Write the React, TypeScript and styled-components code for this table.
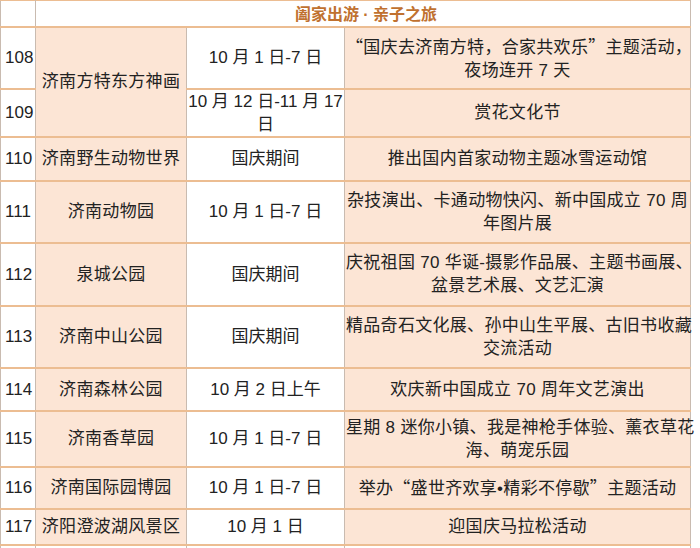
import React from 'react';
import styled, { createGlobalStyle } from 'styled-components';

const GlobalStyle = createGlobalStyle`
  html, body {
    margin: 0;
    padding: 0;
    background: #ffffff;
  }
  body {
    font-family: "Liberation Sans", "Noto Sans CJK SC", sans-serif;
    color: #222222;
  }
`;

const Page = styled.div`
  width: 700px;
  height: 548px;
  overflow: hidden;
  background: #ffffff;
`;

const Table = styled.table`
  width: 690px;
  border-collapse: collapse;
  table-layout: fixed;
`;

const Row = styled.tr<{ $h: number }>`
  height: ${(p) => p.$h}px;
`;

type Kind = 'no' | 'name' | 'date' | 'act' | 'blank';

const Cell = styled.td<{ $kind: Kind }>`
  padding: 0 1px 0 ${(p) => (p.$kind === 'no' ? '4px' : '1px')};
  background: ${(p) => (p.$kind === 'name' || p.$kind === 'act' ? '#fce5d5' : '#ffffff')};
  border-left: 1px solid #c9bbb0;
  border-right: 1px solid #c9bbb0;
  border-top: 2px solid #ecbd92;
  border-bottom: 2px solid #ecbd92;
  text-align: ${(p) => (p.$kind === 'no' ? 'left' : 'center')};
  vertical-align: middle;
  font-size: 17px;
  letter-spacing: ${(p) => (p.$kind === 'name' || p.$kind === 'act' ? '0.3px' : '0')};
  line-height: 23px;
  color: #222222;
  white-space: nowrap;
`;

const HeadCell = styled.td`
  padding: 0 0 0 6px;
  background: #ffffff;
  border-left: 1px solid #c9bbb0;
  border-right: 1px solid #c9bbb0;
  border-top: 1px solid #ecbd92;
  border-bottom: 2px solid #ecbd92;
  text-align: center;
  font-size: 16px;
  font-weight: bold;
  letter-spacing: 0;
  color: #c0712f;
`;

// full-width CJK quote marks
const Wide = styled.span`
  font-family: "Noto Sans CJK SC", sans-serif;
`;

type Item = {
  no: number;
  name?: string;
  span?: number;
  date: React.ReactNode[];
  act: React.ReactNode[];
  h: number;
};

const items: Item[] = [
  {
    no: 108,
    name: '济南方特东方神画',
    span: 2,
    date: ['10 月 1 日-7 日'],
    act: [
      <>
        <Wide>“</Wide>国庆去济南方特，合家共欢乐<Wide>”</Wide>主题活动，
      </>,
      '夜场连开 7 天',
    ],
    h: 62,
  },
  { no: 109, date: ['10 月 12 日-11 月 17', '日'], act: ['赏花文化节'], h: 48 },
  { no: 110, name: '济南野生动物世界', date: ['国庆期间'], act: ['推出国内首家动物主题冰雪运动馆'], h: 44 },
  { no: 111, name: '济南动物园', date: ['10 月 1 日-7 日'], act: ['杂技演出、卡通动物快闪、新中国成立 70 周', '年图片展'], h: 62 },
  { no: 112, name: '泉城公园', date: ['国庆期间'], act: ['庆祝祖国 70 华诞-摄影作品展、主题书画展、', '盆景艺术展、文艺汇演'], h: 63 },
  { no: 113, name: '济南中山公园', date: ['国庆期间'], act: ['精品奇石文化展、孙中山生平展、古旧书收藏', '交流活动'], h: 62 },
  { no: 114, name: '济南森林公园', date: ['10 月 2 日上午'], act: ['欢庆新中国成立 70 周年文艺演出'], h: 43 },
  { no: 115, name: '济南香草园', date: ['10 月 1 日-7 日'], act: ['星期 8 迷你小镇、我是神枪手体验、薰衣草花', '海、萌宠乐园'], h: 56 },
  {
    no: 116,
    name: '济南国际园博园',
    date: ['10 月 1 日-7 日'],
    act: [
      <>
        举办<Wide>“</Wide>盛世齐欢享•精彩不停歇<Wide>”</Wide>主题活动
      </>,
    ],
    h: 42,
  },
  { no: 117, name: '济阳澄波湖风景区', date: ['10 月 1 日'], act: ['迎国庆马拉松活动'], h: 36 },
];

const Lines = ({ lines }: { lines: React.ReactNode[] }) => (
  <>
    {lines.map((l, i) => (
      <React.Fragment key={i}>
        {i > 0 && <br />}
        {l}
      </React.Fragment>
    ))}
  </>
);

export default function App() {
  return (
    <Page>
      <GlobalStyle />
      <Table>
        <colgroup>
          <col style={{ width: 35 }} />
          <col style={{ width: 151 }} />
          <col style={{ width: 158 }} />
          <col style={{ width: 346 }} />
        </colgroup>
        <tbody>
          <Row $h={26}>
            <HeadCell />
            <HeadCell colSpan={3}>阖家出游 · 亲子之旅</HeadCell>
          </Row>
          {items.map((it) => (
            <Row key={it.no} $h={it.h}>
              <Cell $kind="no">{it.no}</Cell>
              {it.name !== undefined && (
                <Cell $kind="name" rowSpan={it.span ?? 1}>
                  {it.name}
                </Cell>
              )}
              <Cell $kind="date">
                <Lines lines={it.date} />
              </Cell>
              <Cell $kind="act">
                <Lines lines={it.act} />
              </Cell>
            </Row>
          ))}
          <Row $h={30}>
            <Cell $kind="blank" />
            <Cell $kind="blank" />
            <Cell $kind="blank" />
            <Cell $kind="blank" />
          </Row>
        </tbody>
      </Table>
    </Page>
  );
}
